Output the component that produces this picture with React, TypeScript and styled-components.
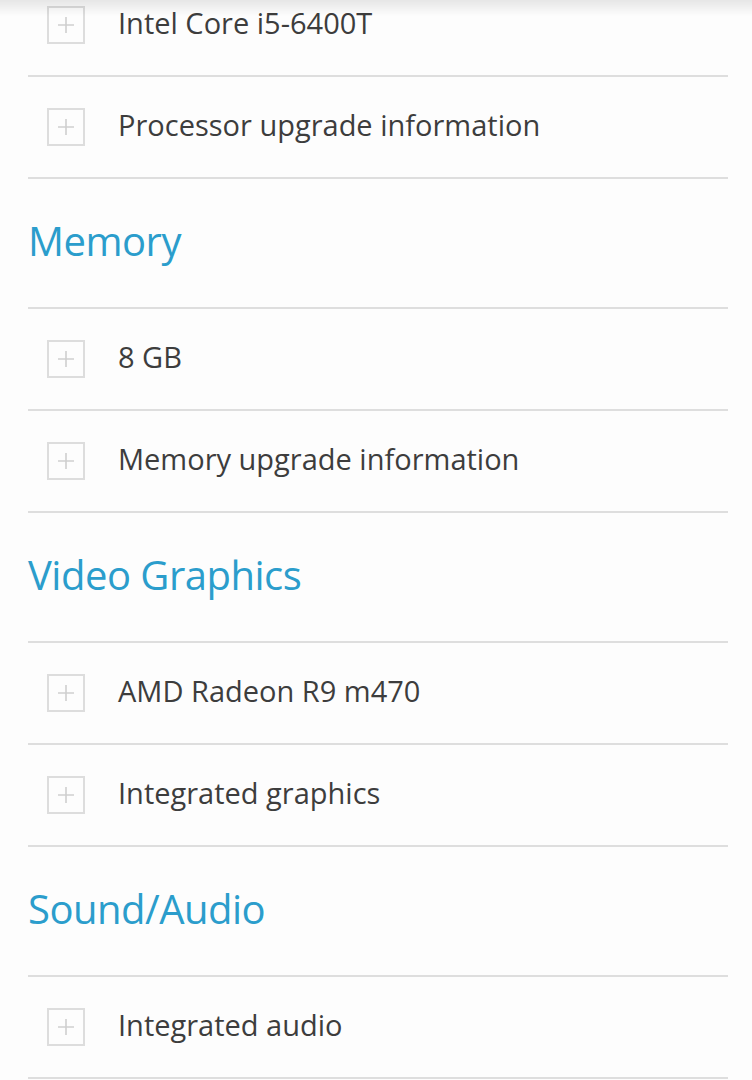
import React from "react";
import styled, { createGlobalStyle } from "styled-components";

const GlobalStyle = createGlobalStyle`
  html, body {
    margin: 0;
    padding: 0;
    background: #fdfdfd;
  }
  body {
    font-family: "Open Sans", "Noto Sans", "Liberation Sans", sans-serif;
    overflow: hidden;
  }
`;

type Section = {
  title?: string;
  items: string[];
};

const sections: Section[] = [
  { items: ["Intel Core i5-6400T", "Processor upgrade information"] },
  { title: "Memory", items: ["8 GB", "Memory upgrade information"] },
  { title: "Video Graphics", items: ["AMD Radeon R9 m470", "Integrated graphics"] },
  { title: "Sound/Audio", items: ["Integrated audio"] },
];

const App = () => {
  return (
    <>
      <GlobalStyle />
      <TopShade />
      <Page>
        {sections.map((s, i) => (
          <React.Fragment key={i}>
            {s.title && <Heading>{s.title}</Heading>}
            {s.items.map((item) => (
              <Row key={item}>
                <PlusBox>
                  <svg width="18" height="18" viewBox="0 0 18 18">
                    <path d="M9 1v16M1 9h16" stroke="#cfcfcf" strokeWidth="1.6" />
                  </svg>
                </PlusBox>
                <Label>{item}</Label>
              </Row>
            ))}
          </React.Fragment>
        ))}
      </Page>
    </>
  );
};

export default App;

const TopShade = styled.div`
  position: fixed;
  top: 0;
  left: 0;
  right: 0;
  height: 16px;
  background: linear-gradient(rgba(0, 0, 0, 0.09), rgba(0, 0, 0, 0));
  pointer-events: none;
  z-index: 2;
`;

const Page = styled.div`
  margin: -25px 24px 0 28px;
  display: flex;
  flex-direction: column;
`;

const Heading = styled.h2`
  margin: 0;
  height: 130px;
  box-sizing: border-box;
  padding-bottom: 6px;
  display: flex;
  align-items: center;
  border-bottom: 2px solid #dedede;
  font-size: 40px;
  font-weight: 400;
  color: #2b9dcc;
  letter-spacing: -0.5px;
`;

const Row = styled.div`
  height: 100px;
  display: flex;
  align-items: center;
  gap: 33px;
  padding-left: 19px;
  border-bottom: 2px solid #dedede;
`;

const PlusBox = styled.div`
  width: 38px;
  height: 38px;
  box-sizing: border-box;
  border: 2px solid #dddddd;
  display: flex;
  align-items: center;
  justify-content: center;
  flex-shrink: 0;
`;

const Label = styled.span`
  margin-bottom: 6px;
  font-size: 29px;
  color: #3d3d3d;
  letter-spacing: 0;
`;
